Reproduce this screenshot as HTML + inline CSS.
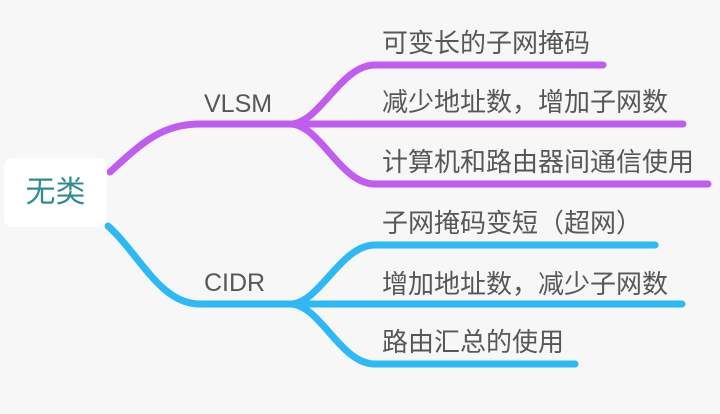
<!DOCTYPE html>
<html><head><meta charset="utf-8"><style>
body{margin:0;width:720px;height:414px;background:#f7f7f7;position:relative;overflow:hidden;font-family:"Liberation Sans","Noto Sans CJK SC",sans-serif;}
.t{position:absolute;font-size:26px;line-height:26px;color:#575757;white-space:nowrap;}
.l{position:absolute;font-size:25px;line-height:25px;color:#575757;}
.box{position:absolute;left:4px;top:158px;width:103px;height:69px;background:#fff;border-radius:8px;}
.root{position:absolute;left:4px;top:158px;width:103px;height:69px;line-height:69px;text-align:center;font-size:30px;color:#2f8c91;}
</style></head><body>
<svg width="720" height="414" style="position:absolute;left:0;top:0" fill="none" stroke-linecap="round">
<g stroke="#c05cef" stroke-width="7">
<path d="M110 172 C140 145,160 124,200 124 L290 124"/>
<path d="M290 124 C320 124,340 65,375 65 L603 65"/>
<path d="M290 124 L683 124"/>
<path d="M290 124 C320 124,340 184,375 184 L708 184"/>
</g>
<g stroke="#2db8f6" stroke-width="7">
<path d="M108 226 C140 255,160 304,200 304 L290 304"/>
<path d="M290 304 C320 304,340 245,375 245 L655 245"/>
<path d="M290 304 L682 304"/>
<path d="M290 304 C320 304,340 364,375 364 L575 364"/>
</g>
</svg>
<div class="box"></div>
<div class="root">无类</div>
<div class="l" style="left:204px;top:92px">VLSM</div>
<div class="l" style="left:204px;top:271px">CIDR</div>
<div class="t" style="left:382px;top:30px">可变长的子网掩码</div>
<div class="t" style="left:382px;top:89px">减少地址数，增加子网数</div>
<div class="t" style="left:382px;top:149px">计算机和路由器间通信使用</div>
<div class="t" style="left:382px;top:210px">子网掩码变短（超网）</div>
<div class="t" style="left:382px;top:271px">增加地址数，减少子网数</div>
<div class="t" style="left:382px;top:329px">路由汇总的使用</div>
</body></html>
